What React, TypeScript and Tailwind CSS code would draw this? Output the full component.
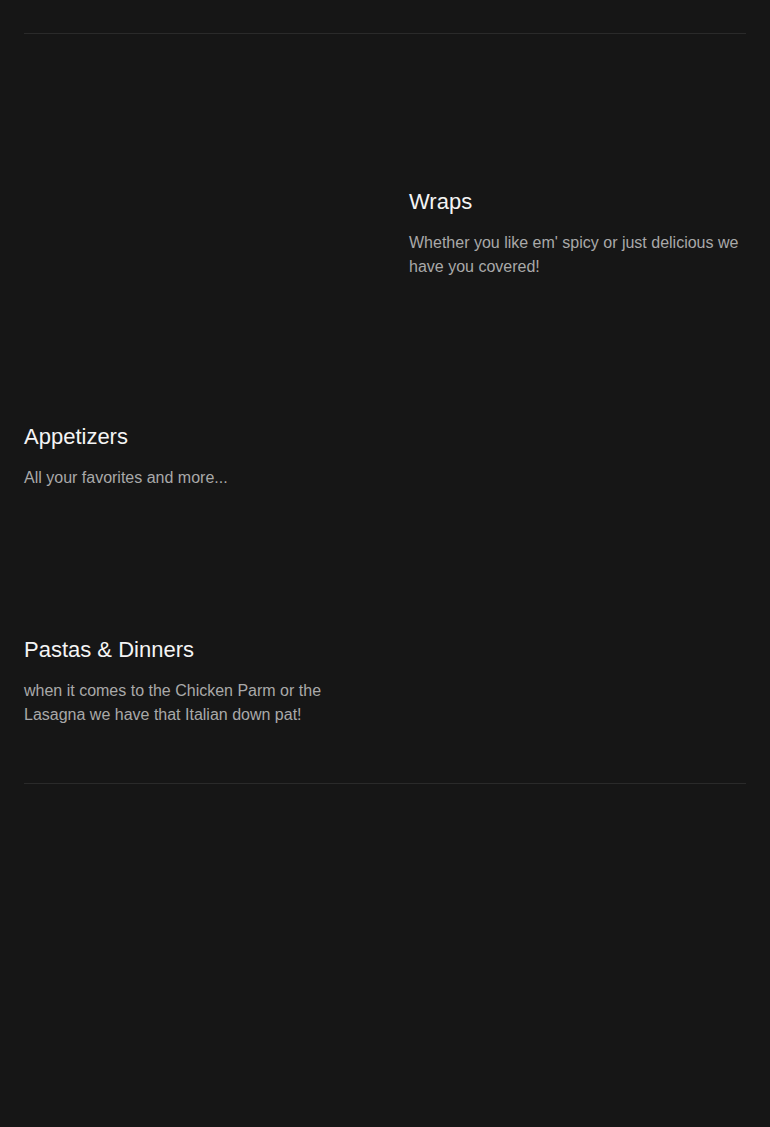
const sections = [
    {
        title: "Wraps",
        text: "Whether you like em' spicy or just delicious we have you covered!",
        side: "right",
        pt: "pt-[154px]",
    },
    {
        title: "Appetizers",
        text: "All your favorites and more...",
        side: "left",
        pt: "pt-[144px]",
    },
    {
        title: "Pastas & Dinners",
        text: "when it comes to the Chicken Parm or the Lasagna we have that Italian down pat!",
        side: "left",
        pt: "pt-[146px]",
    },
];

export default function App() {
    return (
        <div
            className="min-h-[1127px] bg-[#161616] px-6"
            style={{ fontFamily: '"Liberation Sans", Arial, sans-serif' }}
        >
            <div className="h-[33px]" />
            <div className="border-t border-[#2a2a2a]">
                {sections.map((s) => (
                    <div key={s.title} className={`grid grid-cols-2 gap-12 ${s.pt}`}>
                        {s.side === "right" && <div />}
                        <div>
                            <h3 className="text-[22px] leading-7 text-[#f4f4f4]">{s.title}</h3>
                            <p className="mt-[15px] text-base leading-6 text-[#a9a9a9]">{s.text}</p>
                        </div>
                        {s.side === "left" && <div />}
                    </div>
                ))}
                <div className="h-[56px]" />
            </div>
            <div className="border-t border-[#2a2a2a]" />
        </div>
    );
}
